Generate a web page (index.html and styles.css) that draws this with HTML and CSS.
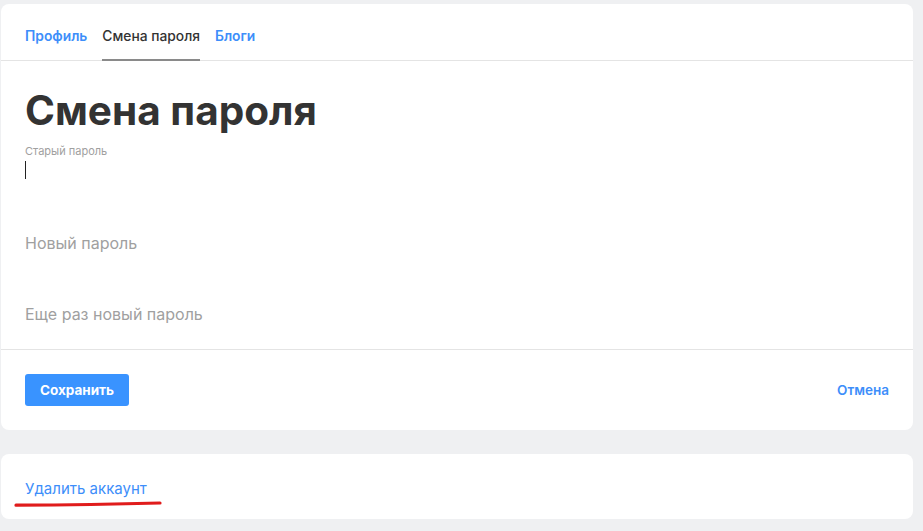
FILE: index.html
```html
<!DOCTYPE html>
<html lang="ru">
<head>
<meta charset="utf-8">
<title>Смена пароля</title>
<link rel="stylesheet" href="styles.css">
</head>
<body>
<div class="page">
  <section class="card main-card">
    <nav class="tabs">
      <a class="tab" href="#">Профиль</a>
      <a class="tab active" href="#">Смена пароля</a>
      <a class="tab" href="#">Блоги</a>
    </nav>
    <div class="form-body">
      <h1 class="title">Смена пароля</h1>
      <div class="field field-focused">
        <label class="field-label small">Старый пароль</label>
        <span class="caret"></span>
      </div>
      <div class="field">
        <label class="field-label">Новый пароль</label>
      </div>
      <div class="field field-last">
        <label class="field-label">Еще раз новый пароль</label>
      </div>
    </div>
    <div class="actions">
      <button class="btn-save">Сохранить</button>
      <a class="cancel" href="#">Отмена</a>
    </div>
  </section>
  <section class="card delete-card">
    <a class="delete-link" href="#">Удалить аккаунт</a>
    <svg class="scribble" width="150" height="8" viewBox="0 0 150 8">
      <path d="M2 5.2 C 40 5, 90 4.5, 146 3" stroke="#e01c1c" stroke-width="3.2" stroke-linecap="round" fill="none"/>
    </svg>
  </section>
</div>
</body>
</html>
```

FILE: styles.css
```css
* { box-sizing: border-box; }
html, body {
  margin: 0;
  padding: 0;
  background: #eff0f2;
  font-family: Inter, "Noto Sans", "Liberation Sans", sans-serif;
}
.page {
  padding: 4px 10px 12px 1px;
  display: flex;
  flex-direction: column;
  gap: 24px;
}
.card {
  background: #fff;
  border-radius: 8px;
}
.tabs {
  display: flex;
  gap: 15px;
  padding: 0 24px;
  border-bottom: 1px solid #e4e4e4;
  height: 57px;
}
.tab {
  display: flex;
  align-items: center;
  padding-top: 9px;
  font-size: 13.8px;
  font-weight: 600;
  color: #3d8efa;
  text-decoration: none;
  border-bottom: 2px solid transparent;
  margin-bottom: -1px;
}
.tab.active {
  color: #333;
  font-weight: 500;
  border-bottom-color: #8a8a8a;
}
.form-body {
  padding: 24px 24px 0;
  border-bottom: 1px solid #e4e4e4;
}
.title {
  margin: 0;
  font-size: 40.5px;
  line-height: 52px;
  font-weight: 700;
  color: #333;
}
.field {
  height: 71px;
  padding-top: 15px;
  position: relative;
}
.field-focused {
  height: 81px;
  padding-top: 8px;
}
.field-last {
  height: 60px;
}
.field-label {
  display: block;
  font-size: 16px;
  color: #a0a0a0;
}
.field-label.small {
  font-size: 11px;
  line-height: 12px;
}
.caret {
  display: block;
  width: 1px;
  height: 18px;
  background: #222;
  margin-top: 4px;
}
.actions {
  display: flex;
  justify-content: space-between;
  align-items: center;
  padding: 24px 24px 24px;
}
.btn-save {
  background: #3993ff;
  color: #fff;
  border: none;
  border-radius: 3px;
  height: 32px;
  padding: 0 15px;
  font-family: inherit;
  font-size: 13.5px;
  font-weight: 700;
}
.cancel {
  color: #3d8efa;
  font-size: 13.5px;
  font-weight: 600;
  text-decoration: none;
}
.delete-card {
  height: 65px;
  padding: 24px 24px 0;
  position: relative;
}
.delete-link {
  color: #3d8efa;
  font-size: 15px;
  text-decoration: none;
}
.scribble {
  position: absolute;
  left: 13px;
  top: 46px;
}
```
